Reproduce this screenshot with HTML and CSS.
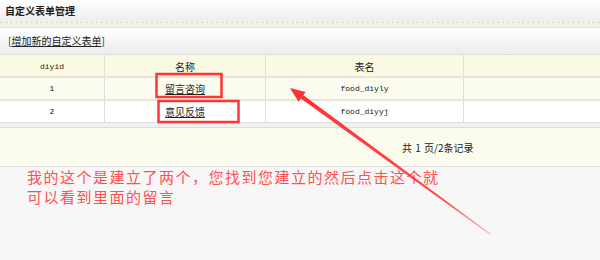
FILE: index.html
```html
<!DOCTYPE html>
<html lang="zh-CN">

<head>
    <meta charset="UTF-8">
    <title>自定义表单管理</title>
    <link rel="stylesheet" href="styles.css">
</head>

<body>
    <div class="page">
        <div class="title-bar">自定义表单管理</div>
        <div class="gap"></div>
        <div class="tool-bar">[<a href="#">增加新的自定义表单</a>]</div>

        <table class="list">
            <tr class="head">
                <td class="c1 mono">diyid</td>
                <td class="c2">名称</td>
                <td class="c3">表名</td>
                <td class="c4"></td>
            </tr>
            <tr class="odd">
                <td class="mono">1</td>
                <td><a href="#">留言咨询</a></td>
                <td class="mono">food_diyly</td>
                <td></td>
            </tr>
            <tr>
                <td class="mono">2</td>
                <td><a href="#">意见反馈</a></td>
                <td class="mono">food_diyyj</td>
                <td></td>
            </tr>
        </table>

        <div class="gap"></div>
        <div class="pager">共 1 页/2条记录</div>

        <div class="note">
            <div class="note-line">我的这个是建立了两个，您找到您建立的然后点击这个就</div>
            <div class="note-line">可以看到里面的留言</div>
        </div>

        <!-- annotation drawn over the screenshot -->
        <svg class="marks" width="600" height="260" viewBox="0 0 600 260">
            <defs>
                <linearGradient id="fade" x1="490" y1="234" x2="300" y2="97" gradientUnits="userSpaceOnUse">
                    <stop offset="0" stop-color="#ff4040" stop-opacity="0.35"/>
                    <stop offset="0.25" stop-color="#ff3b3b" stop-opacity="0.9"/>
                    <stop offset="1" stop-color="#ff3030"/>
                </linearGradient>
            </defs>
            <rect x="156.5" y="74" width="65" height="23" fill="none" stroke="#ff3535" stroke-width="2.5"/>
            <rect x="158.5" y="101" width="80" height="21" fill="none" stroke="#ff3535" stroke-width="2.5"/>
            <polygon points="303.4,95.2 300.8,98.6 489.7,234.4 490.3,233.6" fill="url(#fade)"/>
            <polygon points="290,88 305.6,92 298.6,101.7" fill="#ff3030"/>
        </svg>
    </div>
</body>

</html>
```

FILE: styles.css
```css
body {
    margin: 0;
    background-color: #f7f7f7;
    font-family: 'Noto Sans CJK SC', sans-serif;
    font-size: 10px;
    color: #222;
}

.page {
    position: relative;
    width: 600px;
    height: 260px;
    overflow: hidden;
}

.title-bar {
    height: 22px;
    line-height: 22px;
    padding-left: 5px;
    font-weight: bold;
    color: #1e1e1e;
    background: linear-gradient(#ffffff, #ededed);
    border-bottom: 1px dashed #dcdfae;
}

.gap {
    height: 4px;
    background-color: #f1f1f1;
    border-bottom: 1px solid #dddddd;
}

.tool-bar {
    height: 26px;
    line-height: 26px;
    padding-left: 8px;
    color: #333;
    background: linear-gradient(#ffffff, #ececec);
    border-bottom: 1px solid #dcdcdc;
}

a {
    color: #222;
    text-decoration: underline;
}

.list {
    width: 600px;
    border-collapse: collapse;
    table-layout: fixed;
    background-color: #ffffff;
}

.list td {
    height: 21px;
    padding: 0;
    text-align: center;
    border-right: 1px solid #dddddd;
    border-bottom: 2px solid #e6e6d8;
}

.list tr:last-child td {
    border-bottom: 1px solid #dddddd;
}

.list td:last-child {
    border-right: none;
}

.c1 { width: 104px; }
.c2 { width: 160px; }
.c3 { width: 197px; }

.head td {
    height: 19px;
    padding-top: 2px;
    background-color: #fafae3;
}

.odd td {
    background-color: #fbfbef;
}

.mono {
    font-family: 'Liberation Mono', monospace;
    font-size: 8px;
    color: #111;
}

.pager {
    height: 38px;
    line-height: 40px;
    padding-left: 402px;
    background-color: #fbfbee;
    border-bottom: 1px solid #dddddd;
    color: #222;
    word-spacing: 1px;
}

.note {
    padding-left: 27px;
    color: #ff5050;
}

.note-line {
    height: 20px;
    font-size: 15px;
    line-height: 20px;
    letter-spacing: 1.5px;
    white-space: nowrap;
}

.marks {
    position: absolute;
    left: 0;
    top: 0;
}
```
